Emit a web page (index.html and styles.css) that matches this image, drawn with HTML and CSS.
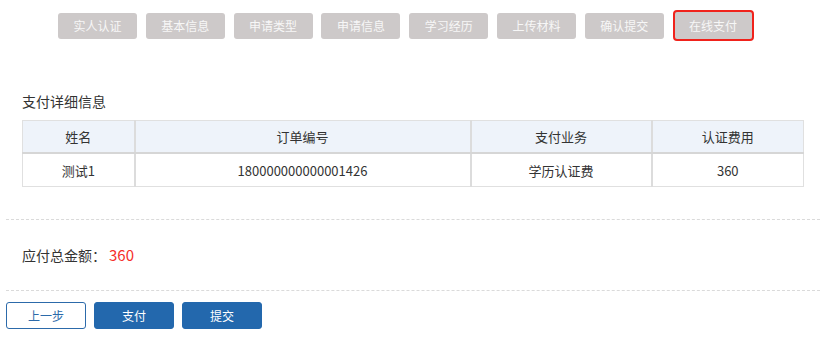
FILE: index.html
```html
<!DOCTYPE html>
<html lang="zh">
<head>
<meta charset="utf-8">
<link rel="stylesheet" href="styles.css">
</head>
<body>
<div class="page">
  <div class="steps">
    <span class="step">实人认证</span>
    <span class="step">基本信息</span>
    <span class="step">申请类型</span>
    <span class="step">申请信息</span>
    <span class="step">学习经历</span>
    <span class="step">上传材料</span>
    <span class="step">确认提交</span>
    <span class="step step-current">在线支付</span>
  </div>

  <div class="section">
    <div class="title">支付详细信息</div>
    <table class="pay-table">
      <colgroup>
        <col class="c1"><col class="c2"><col class="c3"><col class="c4">
      </colgroup>
      <thead>
        <tr><th>姓名</th><th>订单编号</th><th>支付业务</th><th>认证费用</th></tr>
      </thead>
      <tbody>
        <tr><td>测试1</td><td>180000000000001426</td><td>学历认证费</td><td>360</td></tr>
      </tbody>
    </table>
  </div>

  <div class="divider"></div>
  <div class="total">应付总金额：<span class="amount">360</span></div>
  <div class="divider divider-2"></div>

  <div class="actions">
    <button class="btn btn-outline">上一步</button>
    <button class="btn btn-primary">支付</button>
    <button class="btn btn-primary">提交</button>
  </div>
</div>
</body>
</html>
```

FILE: styles.css
```css
html, body {
  margin: 0;
  padding: 0;
  background: #fff;
}
body {
  font-family: "Noto Sans CJK SC", "Microsoft YaHei", "Noto Sans", sans-serif;
  color: #333;
}
.page {
  padding: 0 11px 0 6px;
}
.steps {
  display: flex;
  align-items: center;
  gap: 8.8px;
  padding: 10px 0 0 52px;
  height: 31px;
}
.step {
  box-sizing: border-box;
  width: 79px;
  height: 26px;
  border-radius: 3px;
  background: #cdc9c9;
  color: #f7f7f7;
  font-size: 12px;
  line-height: 26px;
  text-align: center;
}
.step-current {
  width: 81px;
  height: 31px;
  line-height: 27px;
  border: 2px solid #f0221b;
  border-radius: 4px;
}
.section {
  padding: 0 17px 0 16px;
}
.title {
  margin-top: 50px;
  font-size: 14px;
  line-height: 20px;
  color: #333;
}
.pay-table {
  margin-top: 9px;
  width: 781px;
  border-collapse: collapse;
  table-layout: fixed;
  font-size: 13px;
  border: 1px solid #e0e0e0;
}
.c1 { width: 112px; }
.c2 { width: 336px; }
.c3 { width: 181px; }
.c4 { width: 152px; }
.pay-table th,
.pay-table td {
  border-left: 2px solid #dcdcdc;
  text-align: center;
  font-weight: normal;
  color: #333;
  padding: 0;
}
.pay-table th:first-child,
.pay-table td:first-child {
  border-left: 1px solid #e0e0e0;
}
.pay-table th {
  background: #eef3fa;
  height: 31px;
  border-bottom: 2px solid #d6d6d6;
}
.pay-table td {
  height: 32px;
}
.divider {
  margin-top: 32px;
  border-top: 1px dashed #dadada;
}
.total {
  margin-top: 25px;
  padding-left: 16px;
  font-size: 14px;
  line-height: 20px;
  color: #333;
}
.amount {
  margin-left: 3px;
  color: #f5302b;
  font-size: 15px;
}
.divider-2 {
  margin-top: 25px;
}
.actions {
  display: flex;
  gap: 8px;
  margin-top: 11px;
}
.btn {
  box-sizing: border-box;
  width: 80px;
  height: 27px;
  border-radius: 3px;
  font-family: inherit;
  font-size: 12px;
  padding: 0;
  cursor: pointer;
}
.btn-outline {
  background: #fff;
  border: 1px solid #2c6aaa;
  color: #2c6aaa;
}
.btn-primary {
  background: #2368ad;
  border: 1px solid #2368ad;
  color: #fff;
}
```
